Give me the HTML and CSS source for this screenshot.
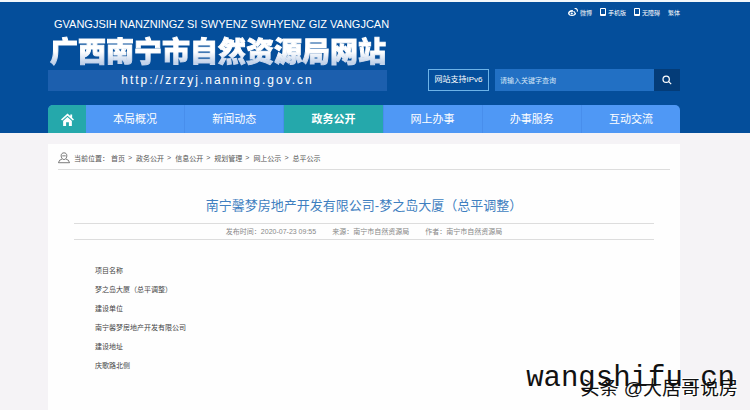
FILE: index.html
```html
<!DOCTYPE html>
<html lang="zh-CN">
<head>
  <meta charset="UTF-8">
  <meta name="viewport" content="width=device-width, initial-scale=1">
  <title>广西南宁市自然资源局网站</title>
  <link rel="stylesheet" href="styles.css">
</head>
<body>
  <header class="header">
    <div class="wrap">
      <div class="tools">
        <a href="#">
          <svg class="weibo" viewBox="0 0 20 16"><path fill-rule="evenodd" d="M8 4C4 4 0 7.500 0 10.500S3.500 16 8 16s8-2.500 8-5c0-1.500-1-2.200-2.200-2.600.8-2-1-2.600-3.800-1.400C10.600 5 10 4 8 4zm0 3.500c3 0 5 1.300 5 3.200S10.800 14 8 14s-5-1.200-5-3 2-3.500 5-3.500z"/><circle cx="7.500" cy="11" r="2.200"/><path d="M13 0c5-1 8 3 6.500 7.500l-2-.6c.9-3-1.300-5.200-4.200-4.700z"/></svg>微博</a>
        <a href="#"><svg class="phone" viewBox="0 0 12 16"><path d="M1 1h10v14H1zM1 13h10"/></svg>手机版</a>
        <a href="#"><svg class="phone" viewBox="0 0 12 16"><path d="M1 1h10v14H1zM1 13h10"/></svg>无障碍</a>
        <a href="#">繁体</a>
      </div>
      <div class="banner">
        <div class="brand">
          <div class="latin">GVANGJSIH NANZNINGZ SI SWYENZ SWHYENZ GIZ VANGJCAN</div>
          <h1>广西南宁市自然资源局网站</h1>
          <div class="url">http://zrzyj.nanning.gov.cn</div>
        </div>
        <form class="search">
          <a class="ipv6" href="#">网站支持IPv6</a>
          <input type="text" aria-label="搜索" placeholder="请输入关键字查询">
          <button type="button" aria-label="查询">
            <svg viewBox="0 0 12 12"><circle cx="5" cy="5" r="3.800"/><path d="M8 8l3 3"/></svg>
          </button>
        </form>
      </div>
      <nav class="nav">
        <a class="home" href="#" aria-label="首页">
          <svg viewBox="0 0 14 14"><path d="M7 .5L0 7l1.200 1.200L7 3l5.800 5.200L14 7l-2-1.900V1.500h-2v1.700z"/><path d="M2.300 8.500L7 4.300l4.700 4.200V14H8.500v-4h-3v4H2.300z"/></svg>
        </a>
        <a href="#">本局概况</a>
        <a href="#">新闻动态</a>
        <a class="active" href="#">政务公开</a>
        <a href="#">网上办事</a>
        <a href="#">办事服务</a>
        <a href="#">互动交流</a>
      </nav>
    </div>
  </header>

  <main class="wrap content">
    <div class="crumbs">
      <svg viewBox="0 0 14 14"><path d="M5 8C3 5.500 3 1 7 1s4 4.500 2 7c-1 1-3 1-4 0zM4.500 8.500L2 9.500l-1.500 3h13l-1.500-3-2.500-1M5 4.500h4"/></svg>
      <span>当前位置：</span><a href="#">首页</a><i>&gt;</i><a href="#">政务公开</a><i>&gt;</i><a href="#">信息公开</a><i>&gt;</i><a href="#">规划管理</a><i>&gt;</i><a href="#">网上公示</a><i>&gt;</i><a href="#">总平公示</a>
    </div>
    <article>
      <h2>南宁馨梦房地产开发有限公司-梦之岛大厦（总平调整）</h2>
      <div class="meta">
        <span>发布时间：2020-07-23 09:55</span>
        <span>来源：南宁市自然资源局</span>
        <span>作者：南宁市自然资源局</span>
      </div>
      <div class="text">
        <p>项目名称</p>
        <p>梦之岛大厦（总平调整）</p>
        <p>建设单位</p>
        <p>南宁馨梦房地产开发有限公司</p>
        <p>建设地址</p>
        <p>庆歌路北侧</p>
      </div>
    </article>
  </main>

  <div class="mark author">头条 @大居哥说房</div>
  <div class="mark site">wangshifu.cn</div>
</body>
</html>
```

FILE: styles.css
```css
* { box-sizing: border-box; }
body {
  margin: 0;
  min-height: 100vh;
  display: flex;
  flex-direction: column;
  background: #f5f3f6;
  color: #555;
  font-family: "Liberation Sans", "Noto Sans CJK SC", sans-serif;
  font-size: 7px;
}
a { color: inherit; text-decoration: none; }
.wrap { margin: 0 70px 0 48px; }

/* header */
.header {
  background: #044e9b;
  border-top: 2px solid #f3f8fb;
  color: #fff;
}
.tools {
  display: flex;
  justify-content: flex-end;
  align-items: center;
  gap: 8px;
  height: 16px;
  padding-top: 4px;
  font-size: 6px;
}
.tools a { display: flex; align-items: center; gap: 2px; }
.tools svg { height: 8px; }
.weibo { width: 10px; fill: #fff; }
.phone { width: 6px; fill: none; stroke: #fff; stroke-width: 2; }
.banner {
  display: flex;
  justify-content: space-between;
  align-items: flex-end;
}
.brand { width: 339px; }
.latin {
  height: 14px;
  line-height: 12px;
  padding-left: 6px;
  font-size: 11px;
  white-space: nowrap;
}
h1 {
  margin: 0 0 2px;
  padding-left: 2px;
  font-size: 28px;
  line-height: 36px;
  font-weight: 900;
  font-family: "Noto Sans CJK SC", sans-serif;
  white-space: nowrap;
  background: linear-gradient(#fff 55%, #c3d3ea 85%);
  background-clip: text;
  -webkit-background-clip: text;
  -webkit-text-stroke: 1px transparent;
  color: transparent;
}
.url {
  height: 21px;
  line-height: 21px;
  background: #1c5fae;
  font-size: 12px;
  letter-spacing: 2px;
  text-align: center;
}
.search { display: flex; height: 22px; margin: 0; }
.ipv6 {
  width: 61px;
  margin-right: 6px;
  border: 1px solid #6db3e8;
  line-height: 20px;
  text-align: center;
  font-size: 8px;
}
.search input {
  width: 159px;
  padding: 0 5px;
  border: 0;
  background: #2270c4;
  color: #fff;
  font: inherit;
}
.search input::placeholder { color: #d5e7f8; }
.search button {
  width: 26px;
  padding: 0;
  border: 0;
  background: #043c78;
}
.search svg {
  display: block;
  width: 10px;
  height: 10px;
  margin: auto;
  fill: none;
  stroke: #fff;
  stroke-width: 1.5;
}
.nav {
  display: flex;
  height: 28px;
  margin-top: 14px;
  border-radius: 5px 5px 0 0;
  overflow: hidden;
  background: #4f98f5;
}
.nav a {
  flex: 1;
  line-height: 29px;
  font-size: 11px;
  text-align: center;
}
.nav a + a + a { border-left: 1px solid #488eec; }
.nav a.home {
  flex: 0 0 38px;
  display: flex;
  align-items: center;
  justify-content: center;
  background: #25a8ab;
}
.home svg { width: 13px; height: 13px; fill: #fff; }
.nav a.active { background: #25a8ab; font-weight: bold; }

/* page */
.content {
  flex: 1;
  margin-top: 11px;
  padding: 0 10px;
  background: #fefefe;
}
.crumbs {
  display: flex;
  align-items: center;
  height: 26px;
  padding-top: 2px;
  border-bottom: 1px solid #ddd;
}
.crumbs svg {
  width: 12px;
  height: 12px;
  margin-right: 4px;
  fill: none;
  stroke: #666;
}
.crumbs span { margin-right: 2px; }
.crumbs i { margin: 0 4px 0 3px; font-style: normal; }
h2 {
  margin: 25px 0 0;
  font-size: 13px;
  line-height: 22px;
  font-weight: normal;
  text-align: center;
  color: #3f7fc0;
}
.meta {
  display: flex;
  justify-content: center;
  gap: 16px;
  margin: 6px 16px 0;
  border-top: 1px solid #ddd;
  border-bottom: 1px solid #ddd;
  line-height: 15px;
  color: #888;
}
.text { padding: 21px 37px; }
.text p { margin: 0; line-height: 19px; color: #444; }

/* marks over the page */
.mark { position: absolute; white-space: nowrap; color: #111; }
.author {
  right: 12px;
  bottom: 7px;
  font-size: 19px;
  line-height: 28px;
  text-shadow: 1px 1px #fff, -1px -1px #fff, 1px -1px #fff, -1px 1px #fff;
}
.site {
  right: 15px;
  bottom: 13px;
  font-family: "Liberation Mono", monospace;
  font-size: 29px;
  line-height: 36px;
}
```
